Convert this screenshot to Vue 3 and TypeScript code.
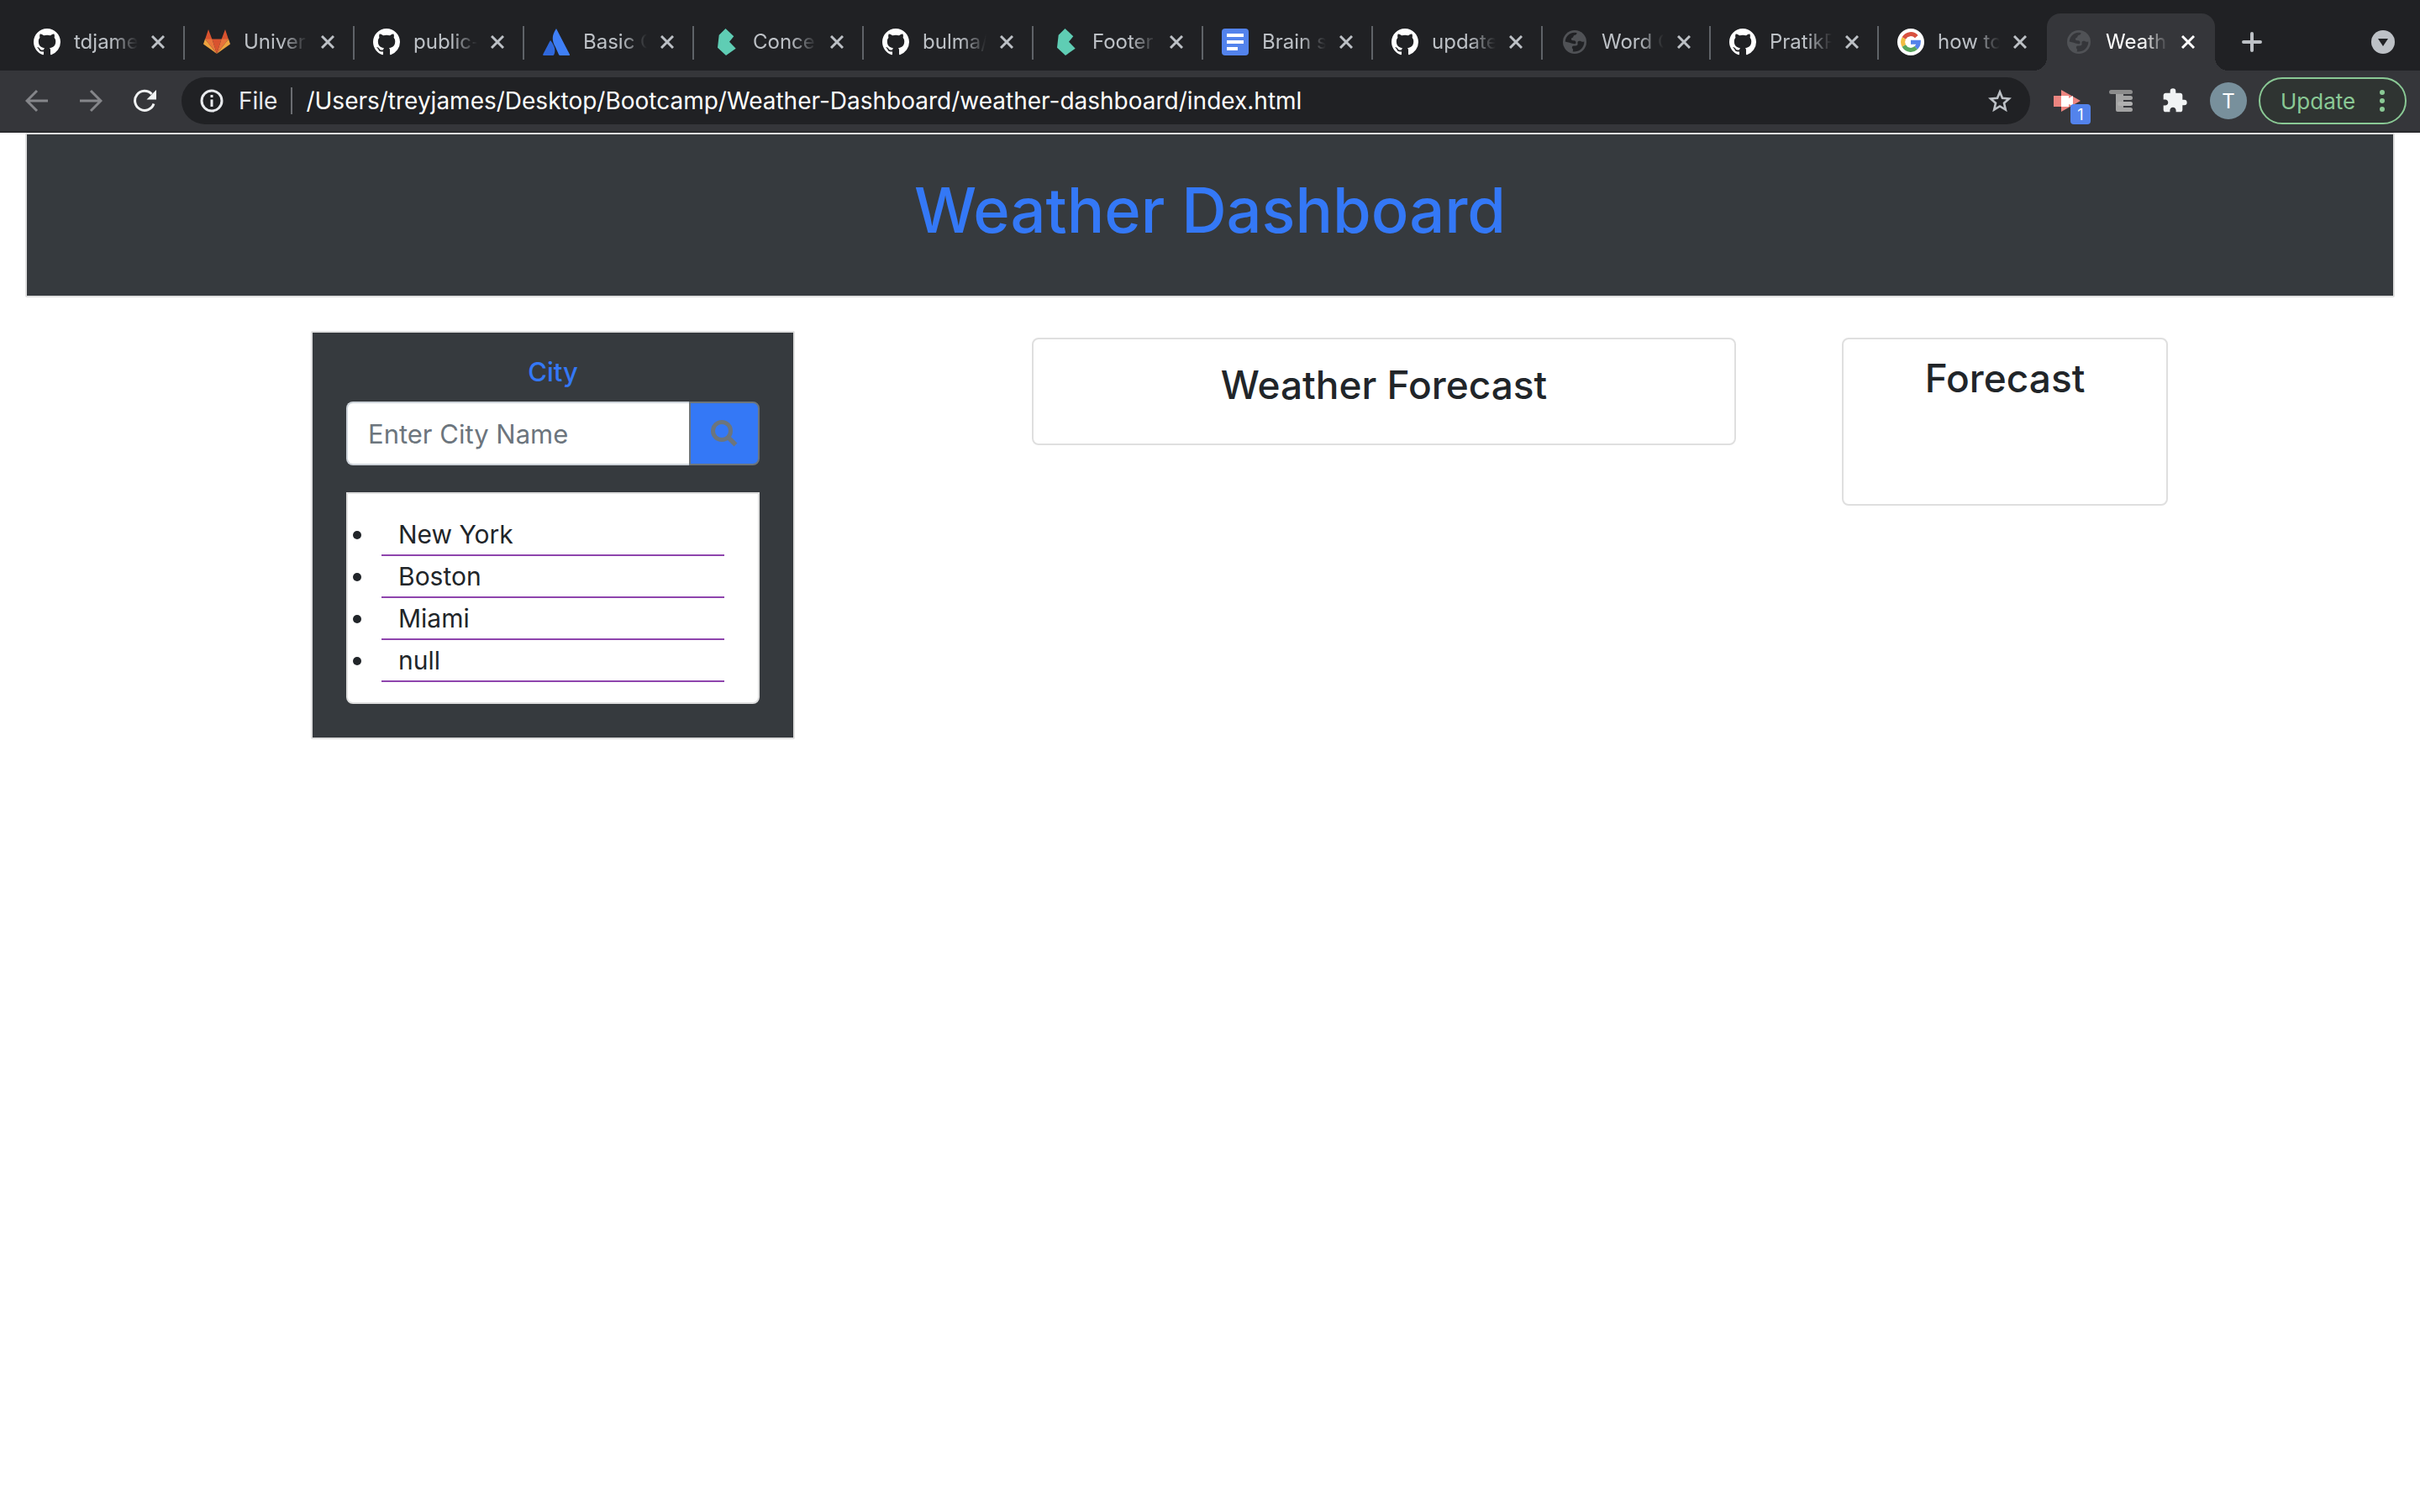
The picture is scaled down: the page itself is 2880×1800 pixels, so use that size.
<script setup lang="ts">
interface Tab {
  icon: 'github' | 'gitlab' | 'atlassian' | 'bulma' | 'docs' | 'globe' | 'google'
  title: string
  active?: boolean
}

const tabs: Tab[] = [
  { icon: 'github', title: 'tdjame' },
  { icon: 'gitlab', title: 'Univer' },
  { icon: 'github', title: 'public-' },
  { icon: 'atlassian', title: 'Basic C' },
  { icon: 'bulma', title: 'Concep' },
  { icon: 'github', title: 'bulma/' },
  { icon: 'bulma', title: 'Footer' },
  { icon: 'docs', title: 'Brain s' },
  { icon: 'github', title: 'update' },
  { icon: 'globe', title: 'Word C' },
  { icon: 'github', title: 'PratikP' },
  { icon: 'google', title: 'how to' },
  { icon: 'globe', title: 'Weath', active: true },
]

const url = '/Users/treyjames/Desktop/Bootcamp/Weather-Dashboard/weather-dashboard/index.html'
const cities = ['New York', 'Boston', 'Miami', 'null']
</script>

<template>
  <div class="browser">
    <nav class="strip" aria-label="Tabs">
      <div class="tabs">
        <div
          v-for="(tab, i) in tabs"
          :key="i"
          class="tab"
          :class="{ active: tab.active, bare: i === 11, narrow: i > 8 }"
        >
          <svg v-if="tab.icon === 'github'" class="fav" viewBox="0 0 16 16">
            <path fill="#fff" d="M8 0C3.58 0 0 3.58 0 8c0 3.54 2.29 6.53 5.47 7.59.4.07.55-.17.55-.38 0-.19-.01-.82-.01-1.49-2.01.37-2.53-.49-2.69-.94-.09-.23-.48-.94-.82-1.13-.28-.15-.68-.52-.01-.53.63-.01 1.08.58 1.23.82.72 1.21 1.87.87 2.33.66.07-.52.28-.87.51-1.07-1.78-.2-3.64-.89-3.64-3.95 0-.87.31-1.59.82-2.15-.08-.2-.36-1.02.08-2.12 0 0 .67-.21 2.2.82.64-.18 1.32-.27 2-.27s1.36.09 2 .27c1.53-1.04 2.2-.82 2.2-.82.44 1.1.16 1.92.08 2.12.51.56.82 1.27.82 2.15 0 3.07-1.87 3.75-3.65 3.95.29.25.54.73.54 1.48 0 1.07-.01 1.93-.01 2.2 0 .21.15.46.55.38A8.01 8.01 0 0 0 16 8c0-4.42-3.58-8-8-8z" />
          </svg>
          <svg v-else-if="tab.icon === 'gitlab'" class="fav" viewBox="0 0 32 32">
            <path fill="#d9532f" d="M6 1 2 13h8.500zM26 1l4 12h-8.500zM10.500 12.500h11L16 30z" />
            <path fill="#e8743b" d="M2 12.500h8.500L16 30zM30 12.500h-8.500L16 30z" />
            <path fill="#eea33f" d="M2 12.500 0 18.500 16 30zM30 12.500 32 18.500 16 30z" />
          </svg>
          <svg v-else-if="tab.icon === 'atlassian'" class="fav" viewBox="0 0 32 32">
            <path fill="#3f7ff6" d="M16 0c-6 9-5 15-1 22l4 9q.5 1 1.500 1H31q1.500 0 .800-1.500z" />
            <path fill="#2f68dc" d="M9.500 14.500Q9 14 8.400 15L.3 30.500Q-.3 32 1 32h11q1 0 1.400-1c2.200-5 .600-11-3.900-16.500z" />
          </svg>
          <svg v-else-if="tab.icon === 'bulma'" class="fav" viewBox="0 0 32 32">
            <path fill="#5fcdb4" d="M15.500 0 7.700 7.700 6 22.700 16 32 27.700 23.700 20 15.700l5.300-6.400z" />
          </svg>
          <svg v-else-if="tab.icon === 'docs'" class="fav" viewBox="0 0 32 32">
            <rect width="32" height="32" rx="4" fill="#5383ec" />
            <path fill="#fff" d="M6 6h20v4H6zM6 14h20v4H6zM6 22h13v4H6z" />
          </svg>
          <svg v-else-if="tab.icon === 'globe'" class="fav" viewBox="0 0 32 32">
            <circle cx="16" cy="16" r="14" fill="#505256" />
            <path class="land" d="M4.700 15.500A11.400 11.400 0 0 1 18.500 4.900c0 2.600-1.500 2.400-3 3.100-1.500.7-.5 2.500-2.500 3-1.500.4-1.500 2.500 0 3 2 .5 4.500 0 4.500 2.500 0 2-1.500 2-3.500 1.500-3-.8-5-1.500-9.300-2.500z" />
            <path class="land" d="M13.500 27.200c1.500-1.700 0-3-.5-4-.6-1.500.5-2.700 2-2.700h2c2 0 3-1.200 2.500-3-.5-2 1-3.200 3-2.700 1.500.4 2.500 1.700 4.800.7A11.400 11.400 0 0 1 13.500 27.200z" />
          </svg>
          <svg v-else class="fav" viewBox="0 0 32 32">
            <circle cx="16" cy="16" r="16" fill="#fff" />
            <g fill="none" stroke-width="5">
              <path stroke="#d85140" d="M7.800 11.500A9.300 9.300 0 0 1 22.800 9.600" />
              <path stroke="#f1bd42" d="M7.800 20.500a9.300 9.300 0 0 1 0-9" />
              <path stroke="#58a65c" d="M22.300 22.900a9.300 9.300 0 0 1-14.500-2.400" />
              <path stroke="#5383ec" d="M16 16.300h9.300a9.300 9.300 0 0 1-3 6.600" />
            </g>
          </svg>
          <span class="title">{{ tab.title }}</span>
          <button class="plain" aria-label="Close tab">
            <svg class="close" viewBox="0 0 16 16"><path d="M1 1l14 14M15 1 1 15" /></svg>
          </button>
        </div>
      </div>
      <button class="plain" aria-label="New tab">
        <svg class="plus" viewBox="0 0 24 24"><path d="M12 2v20M2 12h20" /></svg>
      </button>
      <button class="plain search-tabs" aria-label="Search tabs">
        <svg class="caret" viewBox="0 0 28 28">
          <circle cx="14" cy="14" r="14" fill="#bdc1c6" />
          <path fill="#202124" d="M8 10h12l-6 9z" />
        </svg>
      </button>
    </nav>

    <div class="toolbar">
      <button class="plain" aria-label="Back">
        <svg class="glyph dim" viewBox="0 0 28 28"><path d="M27 14H3M14 2 2 14l12 12" /></svg>
      </button>
      <button class="plain" aria-label="Forward">
        <svg class="glyph dim" viewBox="0 0 28 28"><path d="M1 14h24M14 2l12 12-12 12" /></svg>
      </button>
      <button class="plain" aria-label="Reload">
        <svg class="glyph" viewBox="0 0 28 28">
          <path d="M25 17.500A11.500 11.500 0 1 1 22.500 6" stroke="#f1f3f4" />
          <path d="M28 1v11.500H16.500z" fill="#f1f3f4" stroke="none" />
        </svg>
      </button>
      <div class="omnibox">
        <svg class="info" viewBox="0 0 28 28">
          <circle cx="14" cy="14" r="12" fill="none" stroke="#e8eaed" stroke-width="3" />
          <path fill="#e8eaed" d="M12.500 7h3v3h-3zM12.500 12.500h3V21h-3z" />
        </svg>
        <span class="scheme">File</span>
        <input class="address" type="text" :value="url" aria-label="Address" />
        <button class="plain" aria-label="Bookmark">
          <svg class="info" viewBox="0 0 28 28">
            <path fill="none" stroke="#bdc1c6" stroke-width="2.600" d="m14 3.500 3 7.300 8 .7-6 5.200 1.800 7.800L14 20.400l-6.800 4.100L9 16.700l-6-5.200 8-.7z" />
          </svg>
        </button>
      </div>
      <div class="extensions">
        <button class="plain video" aria-label="Video extension">
          <svg class="ext" viewBox="0 0 32 28">
            <path fill="#ec8580" d="M0 8h9V1l23 13L9 27v-6H0z" />
            <path fill="#fff" d="M9 8h9v3l5-3v12l-5-2v3H9z" />
          </svg>
          <span class="badge">1</span>
        </button>
        <button class="plain" aria-label="Text extension">
          <svg class="glyph" viewBox="0 0 28 28">
            <g stroke="none" fill="#a3a3a3">
              <rect x="8" y="4" width="9" height="23" rx="2" />
              <rect x="10" y="8" width="18" height="5" rx="2.500" />
              <rect x="10" y="15" width="18" height="5" rx="2.500" fill="#b0b0b0" />
              <rect x="10" y="22" width="18" height="5" rx="2.500" />
              <rect x="0" y="1" width="28" height="5" rx="2.500" fill="#8c8c8c" />
            </g>
          </svg>
        </button>
        <button class="plain" aria-label="Extensions">
          <svg class="puzzle" viewBox="0 0 24 24">
            <path fill="#f1f3f4" d="M20.500 11H19V7c0-1.100-.9-2-2-2h-4V3.500a2.500 2.500 0 0 0-5 0V5H4c-1.100 0-2 .9-2 2v3.800h1.500c1.500 0 2.700 1.200 2.700 2.700S5 16.200 3.500 16.200H2V20c0 1.100.9 2 2 2h3.800v-1.500c0-1.500 1.200-2.700 2.700-2.700s2.700 1.200 2.700 2.700V22H17c1.100 0 2-.9 2-2v-4h1.500a2.500 2.500 0 0 0 0-5z" />
          </svg>
        </button>
      </div>
      <button class="avatar">T</button>
      <button class="update">
        Update
        <svg class="dots" viewBox="0 0 6 28"><circle cx="3" cy="4" r="3" /><circle cx="3" cy="14" r="3" /><circle cx="3" cy="24" r="3" /></svg>
      </button>
    </div>

    <main class="page">
      <header class="card hero"><h1>Weather Dashboard</h1></header>
      <div class="columns">
        <section class="card city">
          <form @submit.prevent>
            <label for="city-name">City</label>
            <div class="group">
              <input id="city-name" type="text" placeholder="Enter City Name" />
              <button type="submit" aria-label="Search">
                <svg class="lens" viewBox="0 0 32 32">
                  <circle cx="13" cy="13" r="10.500" fill="none" stroke="#6c757d" stroke-width="5" />
                  <path d="m20.500 20.500 9 9" stroke="#6c757d" stroke-width="5.500" />
                </svg>
              </button>
            </div>
          </form>
          <ul>
            <li v-for="city in cities" :key="city">{{ city }}</li>
          </ul>
        </section>
        <section class="card current"><h2>Weather Forecast</h2></section>
        <section class="card forecast"><h2>Forecast</h2></section>
      </div>
    </main>
  </div>
</template>

<style>
body {
  background: #fff;
}
</style>

<style scoped>
* {
  box-sizing: border-box;
}
.browser {
  font-family: Inter, "Liberation Sans", sans-serif;
  color: #212529;
}
button,
input {
  font: inherit;
}
svg {
  display: block;
  flex: none;
}
.plain {
  display: block;
  flex: none;
  padding: 0;
  border: 0;
  background: none;
}

/* Tab strip */
.strip {
  display: flex;
  align-items: center;
  height: 84px;
  padding: 16px 30px 0 18px;
  background: #202124;
}
.tabs {
  display: flex;
  flex: 1;
  min-width: 0;
  height: 68px;
  margin-right: 32px;
}
.tab {
  position: relative;
  display: flex;
  flex: 101 1 0;
  align-items: center;
  min-width: 0;
  color: #bdc1c6;
}
.tab.narrow {
  flex-grow: 100;
}
.tab::after {
  content: "";
  position: absolute;
  top: 15px;
  right: 0;
  width: 2px;
  height: 40px;
  background: #5f6368;
}
.tab.bare::after {
  display: none;
}
.tab.active {
  border-radius: 16px 16px 0 0;
  background: #35363a;
  color: #fff;
}
.tab.active::before,
.tab.active::after {
  content: "";
  position: absolute;
  top: auto;
  bottom: 0;
  width: 16px;
  height: 16px;
}
.tab.active::before {
  right: 100%;
  background: radial-gradient(circle at 0 0, #202124 16px, #35363a 16px);
}
.tab.active::after {
  right: auto;
  left: 100%;
  background: radial-gradient(circle at 100% 0, #202124 16px, #35363a 16px);
}
.fav {
  width: 32px;
  height: 32px;
  margin-left: 22px;
}
.land {
  fill: #202124;
}
.active .land {
  fill: #35363a;
}
.title {
  flex: 1;
  min-width: 0;
  margin: 0 16px;
  overflow: hidden;
  font-size: 24px;
  line-height: 32px;
  white-space: nowrap;
  mask-image: linear-gradient(to right, #000 60%, transparent);
}
.close {
  width: 16px;
  height: 16px;
  fill: none;
  stroke: currentColor;
  stroke-width: 3;
}
.tab .plain {
  margin-right: 24px;
  color: inherit;
}
.plus {
  width: 24px;
  height: 24px;
  stroke: #bdc1c6;
  stroke-width: 4;
  stroke-linecap: round;
}
.search-tabs {
  margin-left: 130px;
}
.caret {
  width: 28px;
  height: 28px;
}

/* Toolbar */
.toolbar {
  display: flex;
  align-items: center;
  height: 74px;
  padding: 0 16px 0 30px;
  border-bottom: 2px solid #292a2d;
  background: #35363a;
}
.toolbar > .plain {
  margin-right: 36px;
}
.glyph {
  width: 28px;
  height: 28px;
  fill: none;
  stroke: #f1f3f4;
  stroke-width: 3;
}
.dim {
  stroke: #85868a;
}
.omnibox {
  display: flex;
  flex: 1;
  align-items: center;
  min-width: 0;
  height: 56px;
  margin: 0 28px 0 -6px;
  padding: 0 22px;
  border-radius: 28px;
  background: #202124;
  font-size: 28px;
  line-height: 32px;
}
.info {
  width: 28px;
  height: 28px;
}
.scheme {
  margin-left: 18px;
  padding-right: 16px;
  border-right: 2px solid #6b6d71;
  color: #e8eaed;
}
.address {
  flex: 1;
  min-width: 0;
  height: 40px;
  padding: 0 16px;
  border: 0;
  background: none;
  color: #fff;
}
.extensions {
  display: flex;
  align-items: center;
  gap: 34px;
}
.video {
  position: relative;
}
.ext {
  width: 32px;
  height: 28px;
}
.badge {
  position: absolute;
  top: 18px;
  left: 20px;
  width: 24px;
  height: 24px;
  border-radius: 4px;
  background: #5383ec;
  color: #fff;
  font-size: 18px;
  line-height: 26px;
  text-align: center;
}
.puzzle {
  width: 32px;
  height: 32px;
}
.avatar {
  flex: none;
  width: 44px;
  height: 44px;
  margin: 0 14px 0 26px;
  padding: 0;
  border: 0;
  border-radius: 50%;
  background: #78909c;
  color: #fff;
  font-size: 24px;
}
.update {
  display: flex;
  flex: none;
  align-items: center;
  justify-content: space-between;
  width: 176px;
  height: 56px;
  padding: 0 24px;
  border: 2px solid #8ac995;
  border-radius: 28px;
  background: #2f3432;
  color: #8ac995;
  font-size: 26px;
}
.dots {
  width: 6px;
  height: 28px;
  fill: #8ac995;
}

/* Page */
.card {
  border: 2px solid #dfdfdf;
  border-radius: 8px;
  background: #fff;
}
.hero,
.city {
  border-radius: 2px;
  background: #363a3e;
}
.hero {
  height: 196px;
  margin: 0 30px;
}
h1,
h2 {
  margin: 0;
  font-weight: 500;
  text-align: center;
}
h1 {
  padding-top: 42px;
  color: #3478f6;
  font-size: 74px;
  line-height: 96px;
}
h2 {
  font-size: 46px;
  line-height: 60px;
}
.columns {
  display: grid;
  grid-template-columns:
    minmax(0, 370fr) minmax(0, 576fr) minmax(0, 282fr) minmax(0, 838fr)
    minmax(0, 126fr) minmax(0, 388fr) minmax(0, 300fr);
  align-items: start;
  padding-top: 40px;
}
.city {
  grid-column: 2;
  padding: 28px 40px 40px;
  font-size: 31px;
}
.city label {
  display: block;
  margin-bottom: 16px;
  color: #3478f6;
  font-weight: 500;
  line-height: 38px;
  text-align: center;
}
.group {
  display: flex;
  height: 76px;
  margin-bottom: 32px;
}
.group input {
  flex: 1;
  min-width: 0;
  padding: 0 24px;
  border: 2px solid #ced4da;
  border-right: 0;
  border-radius: 8px 0 0 8px;
  background: #fff;
  color: #495057;
}
.group input::placeholder {
  color: #6c757d;
  opacity: 1;
}
.group button {
  display: grid;
  place-items: center;
  width: 84px;
  padding: 0;
  border: 2px solid #6c757d;
  border-radius: 0 8px 8px 0;
  background: #3478f6;
}
.lens {
  width: 32px;
  height: 32px;
}
.city ul {
  margin: 0;
  padding: 24px 40px;
  border: 2px solid #dfdfdf;
  border-radius: 0 0 8px 8px;
  background: #fff;
  font-size: 30px;
  list-style: none;
}
.city li {
  position: relative;
  padding-left: 20px;
  border-bottom: 2px solid #8e44ad;
  line-height: 48px;
}
.city li::before {
  content: "";
  position: absolute;
  top: 20px;
  left: -34px;
  width: 10px;
  height: 10px;
  border-radius: 50%;
  background: #212529;
}
.current {
  grid-column: 4;
  height: 128px;
  margin-top: 8px;
  padding-top: 24px;
}
.forecast {
  grid-column: 6;
  height: 200px;
  margin-top: 8px;
  padding-top: 16px;
}
</style>
